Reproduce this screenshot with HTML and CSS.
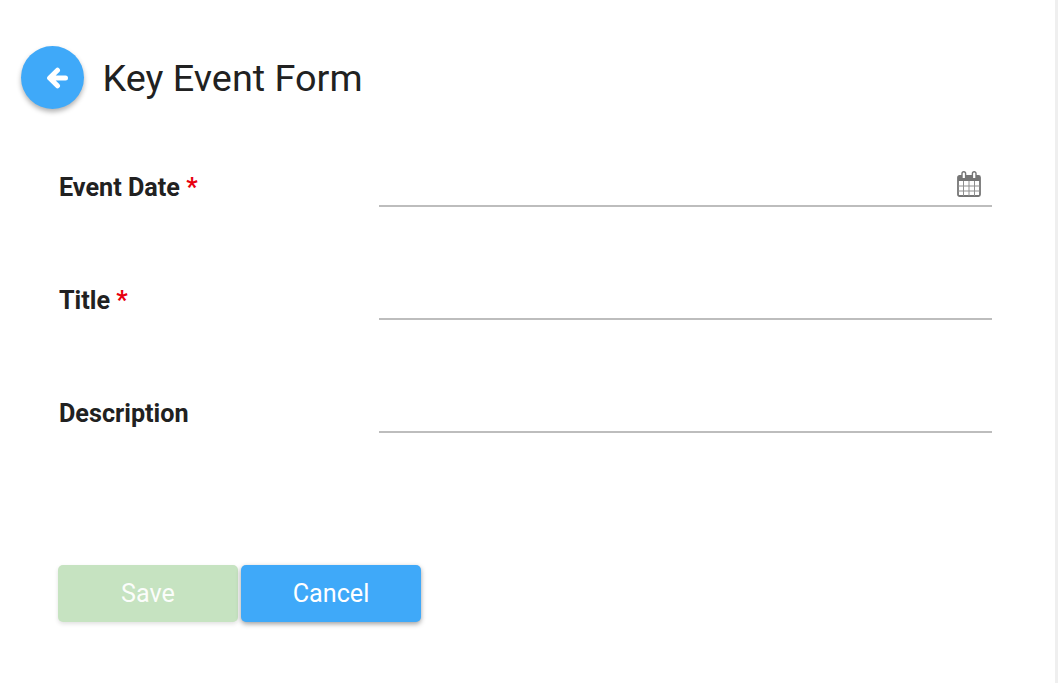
FILE: index.html
```html
<!DOCTYPE html>
<html lang="en">
<head>
<meta charset="utf-8">
<title>Key Event Form</title>
<link rel="stylesheet" href="styles.css">
</head>
<body>
<main class="page">
  <header class="head">
    <button class="back" type="button" aria-label="Back">
      <svg class="back-icon" viewBox="0 0 22 22" width="22" height="22">
        <path d="M11.5 3.2 3.6 11l7.9 7.8M4 11h15.5" fill="none" stroke="#fff" stroke-width="5" stroke-linecap="round" stroke-linejoin="round"/>
      </svg>
    </button>
    <h1 class="title">Key Event Form</h1>
  </header>
  <form class="form">
    <div class="row">
      <label class="label">Event Date <span class="req">*</span></label>
      <div class="field">
        <svg class="cal" viewBox="0 0 24 26" width="24" height="26">
          <rect x="1" y="5" width="22" height="20" rx="1.5" fill="#fff" stroke="#757575" stroke-width="1.8"/>
          <rect x="1" y="5" width="22" height="5" fill="#757575"/>
          <path d="M1 15h22M1 20h22M6.5 10v15M12 10v15M17.5 10v15" stroke="#8f8f8f" stroke-width="1" fill="none"/>
          <path d="M5 7V2.6a1.8 1.8 0 0 1 3.6 0V7M15.4 7V2.6a1.8 1.8 0 0 1 3.6 0V7" fill="#fff" stroke="#757575" stroke-width="1.4"/>
        </svg>
      </div>
    </div>
    <div class="row">
      <label class="label">Title <span class="req">*</span></label>
      <div class="field"></div>
    </div>
    <div class="row">
      <label class="label">Description</label>
      <div class="field"></div>
    </div>
    <div class="actions">
      <button class="btn save" type="button">Save</button>
      <button class="btn cancel" type="button">Cancel</button>
    </div>
  </form>
</main>
</body>
</html>
```
FILE: styles.css
```css
html, body {
  margin: 0;
  height: 100%;
  overflow: hidden;
  background: #fff;
}
body {
  font-family: Roboto, "Liberation Sans", sans-serif;
  color: #212121;
}
.page {
  box-sizing: border-box;
  height: 683px;
  padding: 46px 63px 0 21px;
  border-right: 3px solid #efefef;
}
.head {
  display: flex;
  align-items: center;
  gap: 18.5px;
  height: 63px;
}
.back {
  width: 63px;
  height: 63px;
  padding: 0 0 0 8px;
  border: 0;
  border-radius: 50%;
  background: #3fa9f9;
  box-shadow: 0 3px 5px rgba(0, 0, 0, .3);
  display: flex;
  align-items: center;
  justify-content: center;
}
.title {
  margin: 2px 0 0;
  font-size: 37.8px;
  font-weight: 400;
  line-height: 1.2;
}
.form {
  margin: 50px 0 0 37px;
}
.row {
  display: flex;
  height: 113px;
}
.label {
  width: 321px;
  font-size: 25.2px;
  font-weight: 700;
  line-height: 28px;
  padding: 15px 0 0 1px;
  box-sizing: border-box;
}
.req {
  color: #e8000f;
}
.field {
  flex: 1;
  height: 46px;
  border-bottom: 2px solid #bdbdbd;
  display: flex;
  justify-content: flex-end;
  align-items: flex-start;
}
.cal {
  margin: 12px 11.5px 0 0;
}
.actions {
  display: flex;
  gap: 3px;
  margin-top: 67px;
}
.btn {
  width: 180px;
  height: 57px;
  border: 0;
  border-radius: 5px;
  color: #fff;
  font: 400 25.2px Roboto, "Liberation Sans", sans-serif;
}
.save {
  background: #c6e3c1;
  color: rgba(255, 255, 255, .95);
  box-shadow: 0 2px 4px rgba(0, 0, 0, .12);
}
.cancel {
  background: #3fa9f9;
  box-shadow: 0 2px 5px rgba(0, 0, 0, .38);
}
```
